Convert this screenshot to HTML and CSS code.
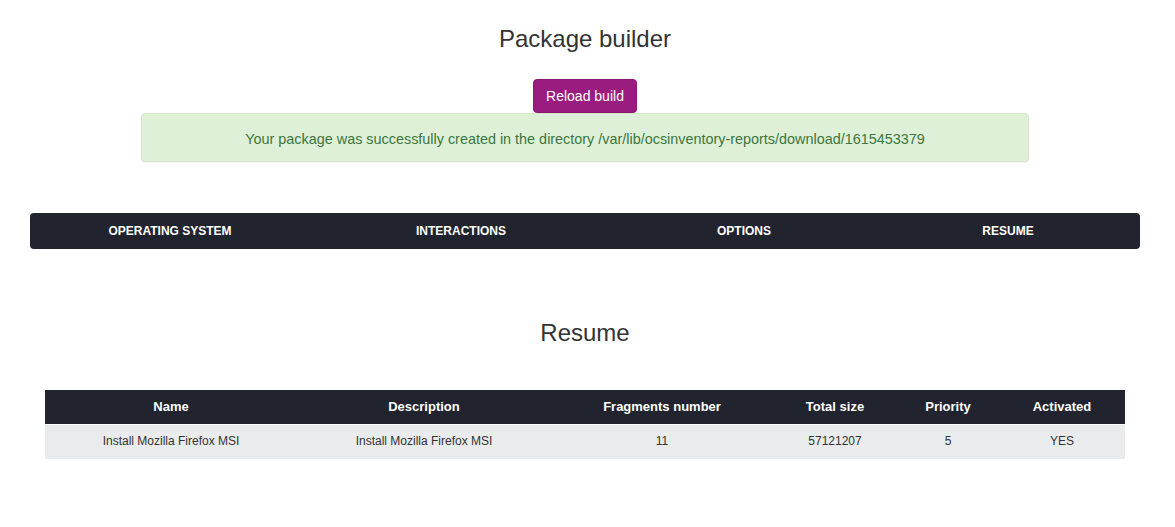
FILE: index.html
```html
<!DOCTYPE html>
<html>
<head>
<meta charset="utf-8">
<title>Package builder</title>
<link rel="stylesheet" href="styles.css">
</head>
<body>
<div class="page">
  <h3 class="title">Package builder</h3>
  <div class="btn-row"><button class="btn-reload">Reload build</button></div>
  <div class="alert">Your package was successfully created in the directory /var/lib/ocsinventory-reports/download/1615453379</div>
  <div class="steps">
    <div class="step">OPERATING SYSTEM</div>
    <div class="step">INTERACTIONS</div>
    <div class="step">OPTIONS</div>
    <div class="step">RESUME</div>
  </div>
  <h3 class="title resume-title">Resume</h3>
  <table class="resume">
    <thead>
      <tr>
        <th class="c1">Name</th>
        <th class="c2">Description</th>
        <th class="c3">Fragments number</th>
        <th class="c4">Total size</th>
        <th class="c5">Priority</th>
        <th class="c6">Activated</th>
      </tr>
    </thead>
    <tbody>
      <tr>
        <td>Install Mozilla Firefox MSI</td>
        <td>Install Mozilla Firefox MSI</td>
        <td>11</td>
        <td>57121207</td>
        <td>5</td>
        <td>YES</td>
      </tr>
    </tbody>
  </table>
</div>
</body>
</html>
```

FILE: styles.css
```css
html, body {
  margin: 0;
  padding: 0;
  background: #ffffff;
}
body {
  font-family: "Liberation Sans", Arial, sans-serif;
  font-size: 14px;
  color: #333333;
  line-height: 1.42857;
}
.page {
  width: 1170px;
  display: flex;
  flex-direction: column;
  align-items: center;
}
.title {
  font-size: 24px;
  font-weight: 400;
  line-height: 26px;
  margin: 26px 0 0 0;
  color: #333333;
  text-align: center;
}
.btn-row {
  margin-top: 27px;
  display: flex;
  justify-content: center;
}
.btn-reload {
  font-family: "Liberation Sans", Arial, sans-serif;
  font-size: 14px;
  line-height: 20px;
  padding: 6px 12px;
  height: 34px;
  width: 104px;
  color: #ffffff;
  background: #9a1c7f;
  border: 1px solid #8a1771;
  border-radius: 4px;
}
.alert {
  width: 886px;
  height: 44px;
  padding-top: 3px;
  box-sizing: content-box;
  display: flex;
  align-items: center;
  justify-content: center;
  background: #dff0d8;
  color: #3c763d;
  border: 1px solid #d6e9c6;
  border-radius: 4px;
  box-shadow: 0 1px 1px rgba(0, 0, 0, 0.05);
  font-size: 14.4px;
}
.steps {
  margin-top: 51px;
  width: 1110px;
  height: 36px;
  background: #21232e;
  border-radius: 4px;
  display: grid;
  grid-template-columns: 280px 302px 264px 264px;
  align-items: center;
}
.step {
  color: #ffffff;
  font-weight: 700;
  font-size: 12px;
  text-align: center;
  padding-top: 2px;
}
.resume-title {
  margin-top: 71px;
}
.resume {
  margin-top: 44px;
  width: 1080px;
  border-collapse: collapse;
  table-layout: fixed;
}
.resume th {
  background: #21232e;
  color: #ffffff;
  font-weight: 700;
  font-size: 13px;
  height: 34px;
  padding: 0;
  text-align: center;
  border-bottom: 1px solid #ffffff;
}
.resume td {
  background: #e9ebec;
  color: #333333;
  font-size: 12px;
  height: 34px;
  padding: 0;
  text-align: center;
}
.c1 { width: 252px; }
.c2 { width: 254px; }
.c3 { width: 222px; }
.c4 { width: 124px; }
.c5 { width: 102px; }
.c6 { width: 126px; }
```
